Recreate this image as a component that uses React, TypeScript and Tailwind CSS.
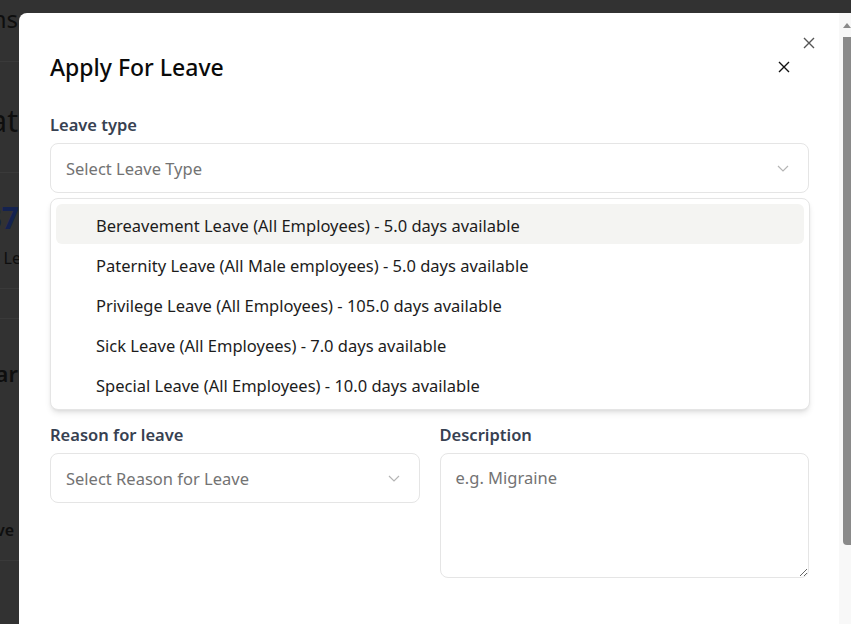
import React from "react";

const leaveTypes = [
  "Bereavement Leave (All Employees) - 5.0 days available",
  "Paternity Leave (All Male employees) - 5.0 days available",
  "Privilege Leave (All Employees) - 105.0 days available",
  "Sick Leave (All Employees) - 7.0 days available",
  "Special Leave (All Employees) - 10.0 days available",
];

const CloseIcon = ({ className }: { className?: string }) => (
  <svg viewBox="0 0 12 12" className={className} fill="none" stroke="currentColor" strokeWidth="1.4">
    <path d="M1 1l10 10M11 1L1 11" />
  </svg>
);

const Chevron = () => (
  <svg viewBox="0 0 12 7" className="w-[12px] h-[7px]" fill="none" stroke="#b5b5b5" strokeWidth="1.2">
    <path d="M1 1l5 5 5-5" />
  </svg>
);

const SelectBox = ({ placeholder }: { placeholder: string }) => (
  <div className="h-[50px] border border-[#e5e5e5] rounded-lg flex items-center justify-between pl-[15px] pr-[19px] bg-white">
    <span className="text-[#737373] text-[16.5px] pt-[3px]">{placeholder}</span>
    <Chevron />
  </div>
);

const Label = ({ children }: { children: React.ReactNode }) => (
  <div className="text-[16.5px] font-semibold text-[#374151] leading-6 mb-[6px]">{children}</div>
);

const Rule = () => <div className="h-px bg-[#3a3a3a]" />;

// the page behind the dimmed overlay, only a sliver is visible
const Backdrop = () => (
  <div className="w-[19px] shrink-0 overflow-hidden text-[#0e0e0e] whitespace-nowrap">
    <div className="h-[61px] pt-[3px] flex justify-end">
      <span className="text-2xl leading-8 pr-[1px]">Applications</span>
    </div>
    <Rule />
    <div className="h-[110px] pt-[41px] flex justify-end">
      <span className="text-[30px] leading-9 pr-[1px]">Leave Stat</span>
    </div>
    <Rule />
    <div className="h-[115px] pt-[27px] flex flex-col items-end">
      <span className="text-[30px] leading-9 font-bold text-[#14224f]">37</span>
      <span className="text-base leading-6 mt-[10px] -mr-[2px]">Total Le</span>
    </div>
    <Rule />
    <div className="h-[29px]" />
    <Rule />
    <div className="h-[241px] pt-[40px] flex flex-col items-end">
      <span className="text-[22px] leading-7 font-semibold pr-[1px]">Calendar</span>
      <span className="text-base leading-6 font-semibold mt-[131px] pr-[5px]">Leave</span>
    </div>
    <Rule />
  </div>
);

export default function App() {
  return (
    <div className="w-[851px] h-[624px] bg-[#323232] flex overflow-hidden font-['Noto_Sans','Open_Sans',sans-serif]">
      <Backdrop />
      <div className="flex-1 flex flex-col min-w-0">
        <div className="h-[13px] shrink-0" />
        <div className="flex-1 bg-white rounded-tl-lg flex relative min-h-0">
          <button className="absolute top-[24px] right-[36px] text-[#555]">
            <CloseIcon className="w-[12px] h-[12px]" />
          </button>

          <div className="flex-1 pl-[31px] pr-[30px] pt-[38px]">
            <div className="flex items-center justify-between h-8">
              <h2 className="text-[23px] font-medium text-[#0a0a0a]">Apply For Leave</h2>
              <CloseIcon className="w-[12px] h-[12px] mr-[19px] text-[#111]" />
            </div>

            <div className="mt-[30px]">
              <Label>Leave type</Label>
              <div className="relative">
                <SelectBox placeholder="Select Leave Type" />
                <div className="absolute left-0 right-[-1px] top-[55px] bg-white border border-[#e5e5e5] rounded-lg shadow-md p-[5px] z-10">
                  {leaveTypes.map((t, i) => (
                    <div
                      key={t}
                      className={`h-10 flex items-center pl-10 pt-[4px] rounded-md text-[16.5px] text-[#1c1c1c] ${i === 0 ? "bg-[#f4f4f2]" : ""}`}
                    >
                      {t}
                    </div>
                  ))}
                </div>
              </div>
            </div>

            {/* fields hidden under the open menu */}
            <div className="grid grid-cols-2 gap-5 mt-6">
              <div>
                <Label>From</Label>
                <SelectBox placeholder="Select date" />
              </div>
              <div>
                <Label>To</Label>
                <SelectBox placeholder="Select date" />
              </div>
            </div>
            <div className="grid grid-cols-2 gap-5 mt-6">
              <div>
                <Label>Duration</Label>
                <SelectBox placeholder="Full day" />
              </div>
              <div />
            </div>

            <div className="grid grid-cols-2 gap-5 mt-[22px]">
              <div>
                <Label>Reason for leave</Label>
                <SelectBox placeholder="Select Reason for Leave" />
              </div>
              <div>
                <Label>Description</Label>
                <textarea
                  placeholder="e.g. Migraine"
                  className="w-full h-[125px] border border-[#e5e5e5] rounded-lg px-[15px] py-[12px] text-[16.5px] placeholder:text-[#737373] outline-none block"
                />
              </div>
            </div>
          </div>

          <div className="w-[12px] shrink-0 bg-[#f8f8f8] flex flex-col items-end">
            <div className="w-[8px] h-[24px] flex items-center justify-center">
              <div className="w-0 h-0 border-l-[4px] border-r-[4px] border-b-[5px] border-l-transparent border-r-transparent border-b-[#8a8a8a]" />
            </div>
            <div className="w-[8px] h-[508px] bg-[#8a8a8a] rounded-bl-[4px]" />
          </div>
        </div>
      </div>
    </div>
  );
}
